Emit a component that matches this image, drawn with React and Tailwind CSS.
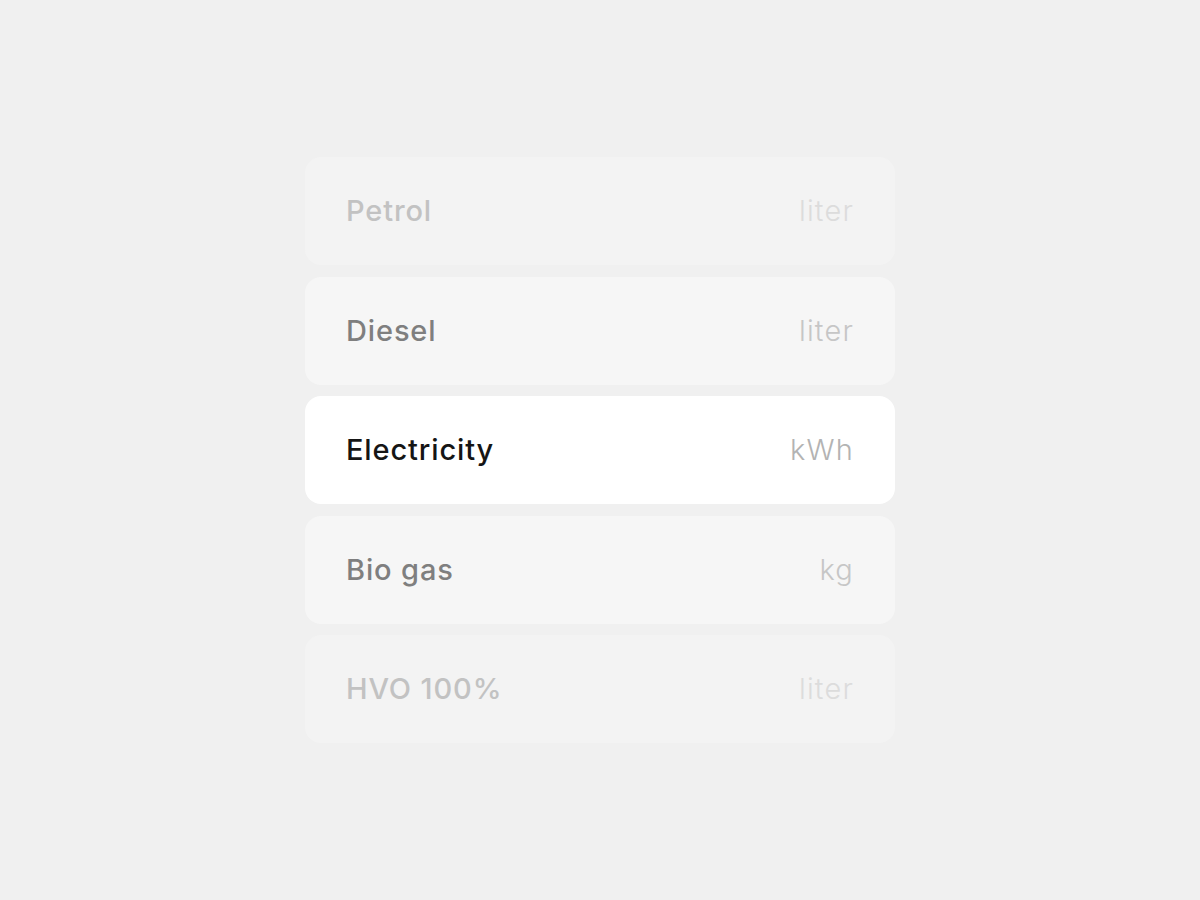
import React from 'react';

const fuels = [
  { name: 'Petrol', unit: 'liter', card: 'bg-[#f3f3f3]', label: 'text-[#c2c2c2]', unitColor: 'text-[#dcdcdc]' },
  { name: 'Diesel', unit: 'liter', card: 'bg-[#f6f6f6]', label: 'text-[#7f7f7f]', unitColor: 'text-[#c6c6c6]' },
  { name: 'Electricity', unit: 'kWh', card: 'bg-white', label: 'text-[#151515]', unitColor: 'text-[#b3b3b3]' },
  { name: 'Bio gas', unit: 'kg', card: 'bg-[#f6f6f6]', label: 'text-[#7f7f7f]', unitColor: 'text-[#c6c6c6]' },
  { name: 'HVO 100%', unit: 'liter', card: 'bg-[#f3f3f3]', label: 'text-[#c2c2c2]', unitColor: 'text-[#dcdcdc]' },
];

export default function App() {
  return (
    <div className="min-h-screen w-full bg-[#f0f0f0] flex items-center justify-center font-['Inter',sans-serif]">
      <div className="w-[590px] flex flex-col gap-[11.5px]">
        {fuels.map(f => (
          <div key={f.name} className={`h-[108px] rounded-2xl pl-[41px] pr-[42px] flex items-center justify-between ${f.card}`}>
            <span className={`text-[29px] font-medium tracking-[0.03em] ${f.label}`}>{f.name}</span>
            <span className={`text-[29px] font-light tracking-[0.04em] -mr-[1px] ${f.unitColor}`}>{f.unit}</span>
          </div>
        ))}
      </div>
    </div>
  );
}
